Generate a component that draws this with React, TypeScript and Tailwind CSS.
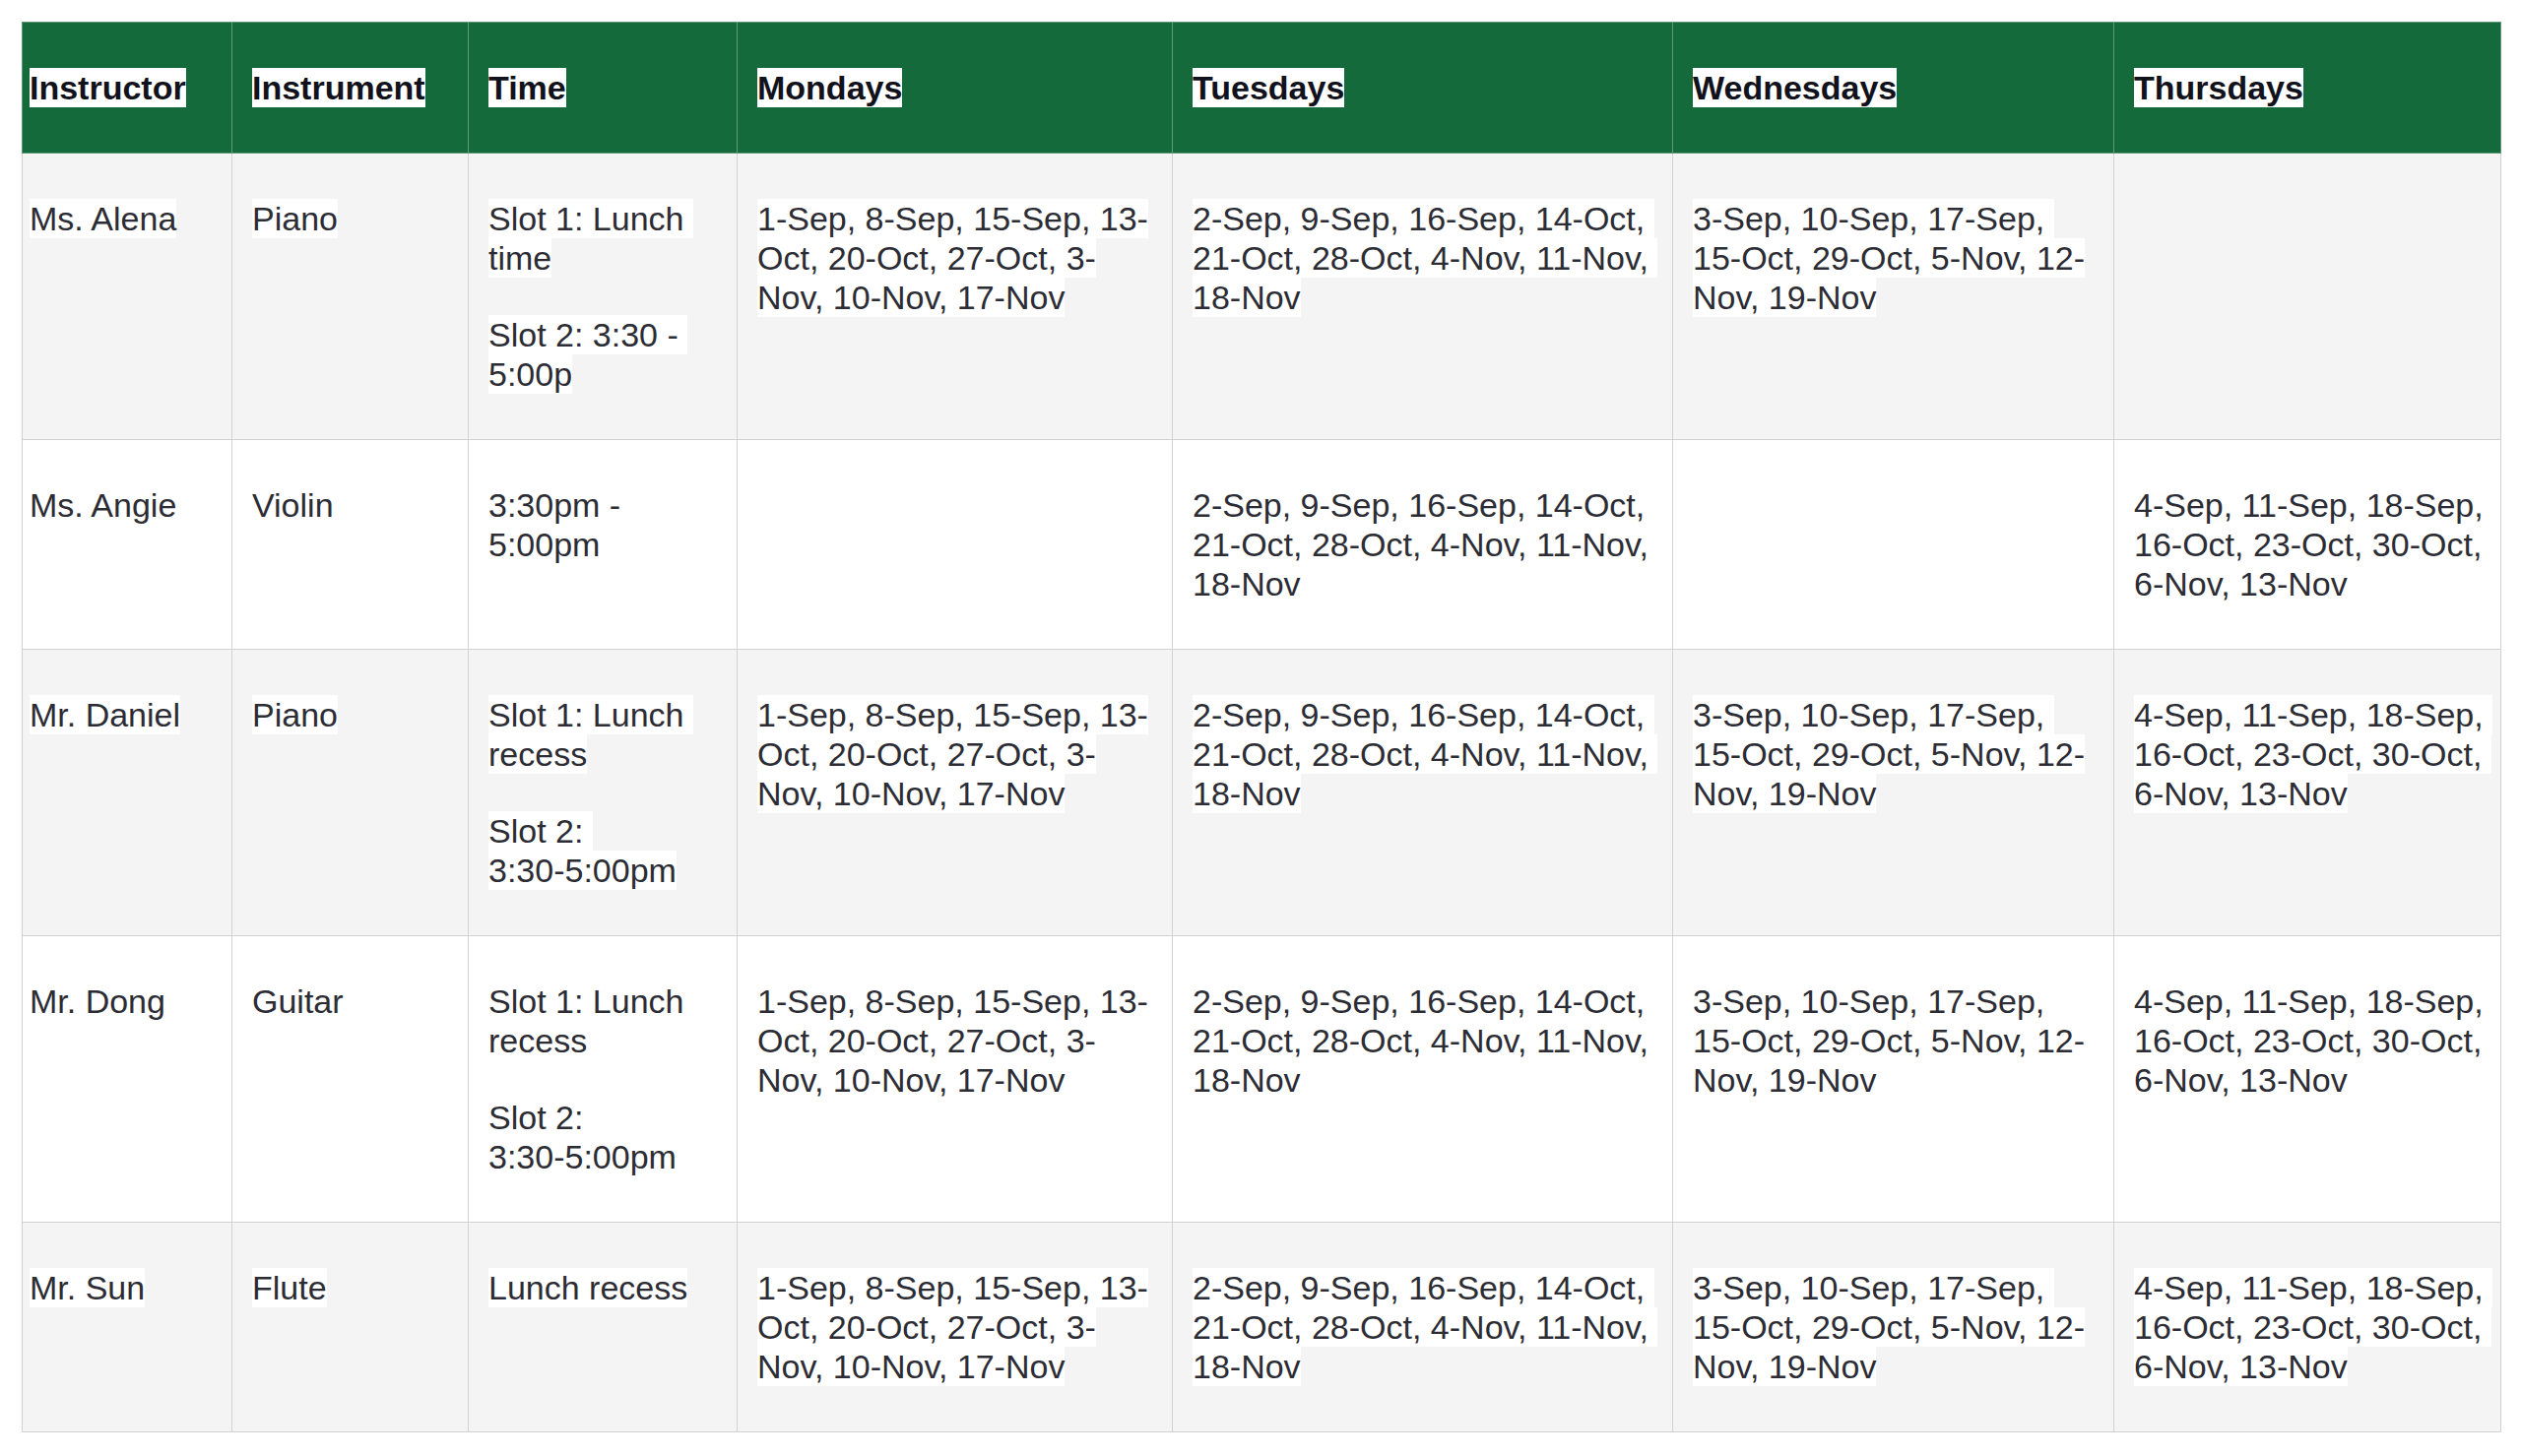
const NB = "\u00a0";

type Cell = string[][];

const headers = ["Instructor", "Instrument", "Time", "Mondays", "Tuesdays", "Wednesdays", "Thursdays"];

const mon: Cell = [["1-Sep, 8-Sep, 15-Sep, 13-", "Oct, 20-Oct, 27-Oct, 3-", "Nov, 10-Nov, 17-Nov"]];
const tue: Cell = [[`2-Sep, 9-Sep, 16-Sep, 14-Oct,${NB}`, `21-Oct, 28-Oct, 4-Nov, 11-Nov,${NB}`, "18-Nov"]];
const wed: Cell = [[`3-Sep, 10-Sep, 17-Sep,${NB}`, "15-Oct, 29-Oct, 5-Nov, 12-", "Nov, 19-Nov"]];
const thu: Cell = [[`4-Sep, 11-Sep, 18-Sep,${NB}`, `16-Oct, 23-Oct, 30-Oct,${NB}`, "6-Nov, 13-Nov"]];
const slots: Cell = [
  [`Slot 1: Lunch${NB}`, "recess"],
  [`Slot 2:${NB}`, "3:30-5:00pm"],
];

const rows: Cell[][] = [
  [
    [["Ms. Alena"]],
    [["Piano"]],
    [
      [`Slot 1: Lunch${NB}`, "time"],
      [`Slot 2: 3:30 -${NB}`, "5:00p"],
    ],
    mon,
    tue,
    wed,
    [],
  ],
  [[["Ms. Angie"]], [["Violin"]], [[`3:30pm -${NB}`, "5:00pm"]], [], tue, [], thu],
  [[["Mr. Daniel"]], [["Piano"]], slots, mon, tue, wed, thu],
  [[["Mr. Dong"]], [["Guitar"]], slots, mon, tue, wed, thu],
  [[["Mr. Sun"]], [["Flute"]], [["Lunch recess"]], mon, tue, wed, thu],
];

function Lines({ cell }: { cell: Cell }) {
  return (
    <>
      {cell.map((para, i) => (
        <div key={i} className={i > 0 ? "mt-[38px]" : ""}>
          {para.map((line, j) => (
            <span key={j}>
              <span className="bg-white py-px">{line}</span>
              {j < para.length - 1 && <br />}
            </span>
          ))}
        </div>
      ))}
    </>
  );
}

export default function App() {
  return (
    <div
      className="min-h-screen bg-white p-[22px]"
      style={{ fontFamily: '"Liberation Sans", Arial, Helvetica, sans-serif' }}
    >
      <table className="w-[2517px] table-fixed border-collapse text-[34px] leading-[40px]">
        <colgroup>
          <col className="w-[213px]" />
          <col className="w-[240px]" />
          <col className="w-[273px]" />
          <col className="w-[442px]" />
          <col className="w-[508px]" />
          <col className="w-[448px]" />
          <col className="w-[393px]" />
        </colgroup>
        <thead>
          <tr className="bg-[#146a3a]">
            {headers.map((h, i) => (
              <th
                key={h}
                className={`border border-[#5f9a76] py-[46px] pr-[12px] text-left align-top font-bold text-[#12121c] whitespace-nowrap ${
                  i === 0 ? "pl-[7px]" : "pl-[20px]"
                }`}
              >
                <span className="bg-white py-px">{h}</span>
              </th>
            ))}
          </tr>
        </thead>
        <tbody>
          {rows.map((row, r) => (
            <tr key={r} className={r % 2 === 0 ? "bg-[#f4f4f4]" : "bg-white"}>
              {row.map((cell, c) => (
                <td
                  key={c}
                  className={`border border-[#d2d2d2] py-[46px] pr-[12px] align-top font-normal text-[#2c2c34] whitespace-nowrap ${
                    c === 0 ? "pl-[7px]" : "pl-[20px]"
                  }`}
                >
                  <Lines cell={cell} />
                </td>
              ))}
            </tr>
          ))}
        </tbody>
      </table>
    </div>
  );
}
